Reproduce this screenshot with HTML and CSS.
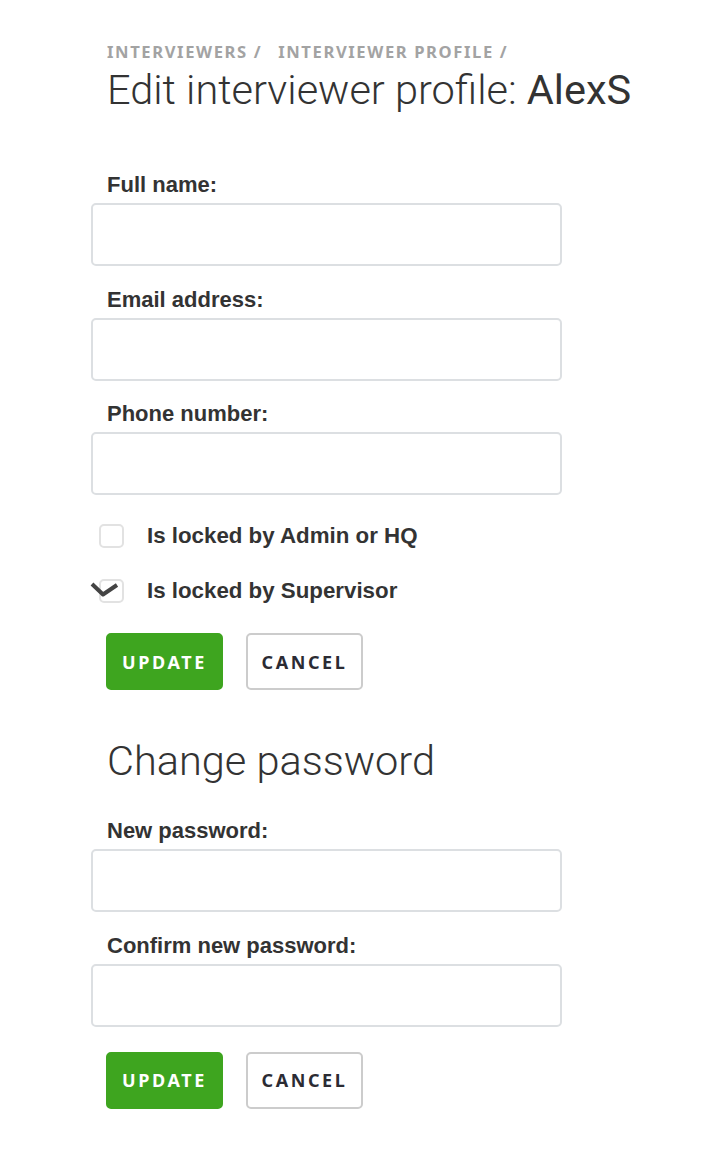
FILE: index.html
```html
<!DOCTYPE html>
<html>
<head>
<meta charset="utf-8">
<link rel="stylesheet" href="styles.css">
</head>
<body>
<div class="page">
  <div class="head">
    <div class="crumbs"><span class="crumb">Interviewers /</span><span class="crumb">Interviewer profile /</span></div>
    <h1 class="title">Edit interviewer profile: <span class="name">AlexS</span></h1>
  </div>

  <form class="form">
    <div class="group">
      <label class="label">Full name:</label>
      <input class="input" type="text">
    </div>
    <div class="group">
      <label class="label">Email address:</label>
      <input class="input" type="text">
    </div>
    <div class="group">
      <label class="label">Phone number:</label>
      <input class="input" type="text">
    </div>

    <div class="checks">
      <div class="check">
        <span class="box"></span>
        <span class="check-label">Is locked by Admin or HQ</span>
      </div>
      <div class="check">
        <span class="box checked">
          <svg class="tick" width="32" height="20" viewBox="0 0 32 20"><path d="M4 3 L15 13.5 L29 4" fill="none" stroke="#444" stroke-width="4" stroke-linecap="butt" stroke-linejoin="round"/></svg>
        </span>
        <span class="check-label">Is locked by Supervisor</span>
      </div>
    </div>

    <div class="buttons">
      <button class="btn btn-primary" type="button">Update</button>
      <button class="btn btn-default" type="button">Cancel</button>
    </div>
  </form>

  <h2 class="subtitle">Change password</h2>

  <form class="form form-second">
    <div class="group">
      <label class="label">New password:</label>
      <input class="input" type="password">
    </div>
    <div class="group">
      <label class="label">Confirm new password:</label>
      <input class="input" type="password">
    </div>
    <div class="buttons buttons-tight">
      <button class="btn btn-primary" type="button">Update</button>
      <button class="btn btn-default" type="button">Cancel</button>
    </div>
  </form>
</div>
</body>
</html>
```
FILE: styles.css
```css
html, body {
  margin: 0;
  padding: 0;
  background: #ffffff;
}
body {
  font-family: "Liberation Sans", Arial, sans-serif;
  color: #333333;
}
.page {
  width: 471px;
  margin-left: 91px;
  padding-top: 41px;
}
.head {
  padding-left: 16px;
}
.crumbs {
  display: flex;
  gap: 16px;
  font-family: "Noto Sans", sans-serif;
  font-weight: 700;
  font-size: 16.6px;
  line-height: 22px;
  letter-spacing: 1.6px;
  text-transform: uppercase;
  color: #a3a3a3;
}
.title {
  margin: 3px 0 0 0;
  font-family: Roboto, sans-serif;
  font-weight: 300;
  font-size: 41.5px;
  line-height: 48px;
  color: #333333;
  white-space: nowrap;
}
.title .name {
  font-weight: 400;
}
.form {
  margin: 0;
  padding-top: 58px;
}
.group {
  display: flex;
  flex-direction: column;
  margin-bottom: 20.5px;
}
.label {
  padding-left: 16px;
  font-weight: 700;
  font-size: 22px;
  line-height: 26px;
  margin-bottom: 5px;
  color: #333333;
}
.input {
  box-sizing: border-box;
  width: 471px;
  height: 63px;
  margin: 0;
  border: 2px solid #dcdfe2;
  border-radius: 5px;
  background: #fff;
  outline: none;
}
.checks {
  display: flex;
  flex-direction: column;
  gap: 29px;
  padding-top: 7.5px;
}
.check {
  display: flex;
  align-items: center;
  gap: 23px;
  padding-left: 8px;
}
.box {
  position: relative;
  box-sizing: border-box;
  width: 25px;
  height: 24px;
  border: 2px solid #e2e2e2;
  border-radius: 5px;
  background: #fff;
}
.tick {
  position: absolute;
  left: -13px;
  top: 0px;
}
.check-label {
  font-weight: 700;
  font-size: 22.3px;
  line-height: 26px;
  color: #333333;
}
.buttons {
  display: flex;
  gap: 23px;
  padding-left: 15px;
  padding-top: 29px;
}
.buttons-tight {
  padding-top: 4.5px;
}
.btn {
  box-sizing: border-box;
  width: 117px;
  height: 57px;
  border-radius: 5px;
  font-family: "Noto Sans", sans-serif;
  font-weight: 700;
  font-size: 18px;
  letter-spacing: 2.6px;
  text-transform: uppercase;
  cursor: pointer;
  padding: 0;
}
.btn-primary {
  background: #3ea51f;
  border: 2px solid #3ea51f;
  color: #ffffff;
}
.btn-default {
  background: #ffffff;
  border: 2px solid #cccccc;
  color: #2b2b33;
}
.subtitle {
  margin: 0;
  padding-top: 46px;
  padding-left: 16px;
  font-family: Roboto, sans-serif;
  font-weight: 300;
  font-size: 41.5px;
  line-height: 50px;
  color: #333333;
}
.form-second {
  padding-top: 32px;
}
```
